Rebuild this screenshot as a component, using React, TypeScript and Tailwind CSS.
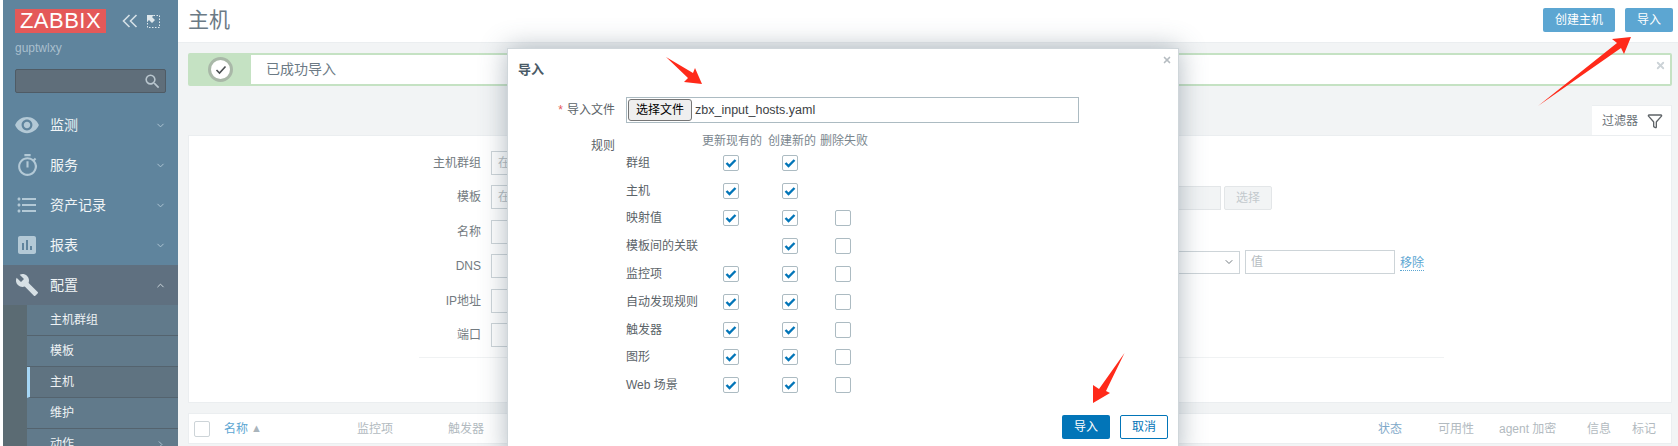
import React from 'react';
import { MdVisibility, MdOutlineTimer, MdFormatListBulleted, MdAssessment, MdBuild, MdSearch } from 'react-icons/md';
import { ChevronDown, ChevronUp, ChevronRight, Funnel, X } from 'lucide-react';

// Menu principal
const menuItems = [
  { label: '监测', icon: <MdVisibility size={26} /> },
  { label: '服务', icon: <MdOutlineTimer size={25} /> },
  { label: '资产记录', icon: <MdFormatListBulleted size={24} /> },
  { label: '报表', icon: <MdAssessment size={24} /> }
];

const subItems = ['主机群组', '模板', '主机', '维护', '动作'];

// Lignes du formulaire derrière la fenêtre
const filterRows = [
  { label: '主机群组', placeholder: '在' },
  { label: '模板', placeholder: '在' },
  { label: '名称' },
  { label: 'DNS' },
  { label: 'IP地址' },
  { label: '端口' }
];

const rules = [
  { label: '群组', update: true, create: true },
  { label: '主机', update: true, create: true },
  { label: '映射值', update: true, create: true, remove: true },
  { label: '模板间的关联', update: false, create: true, remove: true },
  { label: '监控项', update: true, create: true, remove: true },
  { label: '自动发现规则', update: true, create: true, remove: true },
  { label: '触发器', update: true, create: true, remove: true },
  { label: '图形', update: true, create: true, remove: true },
  { label: 'Web 场景', update: true, create: true, remove: true }
];

const Check: React.FC<{ checked?: boolean }> = ({ checked }) => (
  <div className="w-[16px] h-[16px] border border-[#acbbc2] rounded-[2px] bg-white flex items-center justify-center">
    {checked && (
      <svg width="12" height="10" viewBox="0 0 12 10">
        <path d="M1.5 5 L4.5 8 L10.5 2" fill="none" stroke="#0275b8" strokeWidth="2.4" />
      </svg>
    )}
  </div>
);

const Sidebar: React.FC = () => (
  <div className="w-[175px] h-[446px] shrink-0 bg-[#5f849d] overflow-hidden flex flex-col">
    <div className="h-[105px] shrink-0 pl-[12px] pt-[9px]">
      <div className="flex items-center">
        <div className="w-[91px] h-[24px] bg-[#e45959] text-white text-[22px] leading-[24px] text-center tracking-[0.5px]">
          ZABBIX
        </div>
        <svg className="ml-[16px]" width="16" height="14" viewBox="0 0 16 14">
          <path d="M7.5 1 L1.5 7 L7.5 13 M14.5 1 L8.5 7 L14.5 13" fill="none" stroke="#d5e0e6" strokeWidth="1.6" />
        </svg>
        <svg className="ml-[9px]" width="13" height="13" viewBox="0 0 13 13">
          <rect x="0.5" y="0.5" width="12" height="12" fill="none" stroke="#dfe8ec" strokeDasharray="1.5 1.5" />
          <path d="M0 0 H7 L5 2 L8 5 L5 8 L2 5 L0 7 Z" fill="#dfe8ec" />
        </svg>
      </div>
      <div className="text-[12px] leading-[14px] mt-[8px] text-[#a9bfcd]">guptwlxy</div>
      <div className="w-[151px] h-[24px] mt-[14px] bg-[#5f6e7a] border border-[#4f5b65] rounded-[2px] flex items-center justify-end pr-[3px] text-[#b9c6ce]">
        <MdSearch size={19} />
      </div>
    </div>
    {menuItems.map(item => (
      <div key={item.label} className="h-[40px] shrink-0 flex items-center text-[#f0f4f6] text-[14px]">
        <div className="w-[47px] flex justify-center pl-[1px] text-[#b3c9d6]">{item.icon}</div>
        <span>{item.label}</span>
        <ChevronDown className="ml-auto mr-[12px] text-[#b3c9d6]" size={11} />
      </div>
    ))}
    <div className="h-[40px] shrink-0 flex items-center bg-[#5f7080] text-[#f0f4f6] text-[14px]">
      <div className="w-[47px] flex justify-center pl-[1px] text-[#d7e0e5]">
        <MdBuild size={24} />
      </div>
      <span>配置</span>
      <ChevronUp className="ml-auto mr-[12px] text-[#d7e0e5]" size={11} />
    </div>
    <div className="flex flex-1">
      <div className="w-[24px] bg-[#5b6b73]" />
      <div className="flex-1">
        {subItems.map(item => (
          <div
            key={item}
            className={`h-[31px] flex items-center text-[12px] text-[#eef2f4] border-b border-[#54636e] ${
              item === '主机' ? 'bg-[#5f7381] border-l-[3px] border-l-[#a5d6f5] pl-[20px]' : 'bg-[#617a8b] pl-[23px]'
            }`}
          >
            {item}
            {item === '动作' && <ChevronRight className="ml-auto mr-[12px] text-[#b3c9d6]" size={11} />}
          </div>
        ))}
      </div>
    </div>
  </div>
);

const Background: React.FC = () => (
  <div className="flex-1 min-w-0 bg-[#f2f4f5] flex flex-col">
    <div className="h-[43px] shrink-0 bg-white border-b border-[#ebeef0] flex items-center pl-[10px] pr-[5px]">
      <h1 className="text-[21px] text-[#6b7a85] mb-[2px]">主机</h1>
      <div className="ml-auto flex gap-[10px] mb-[3px]">
        <button className="w-[72px] h-[24px] bg-[#5ca6d2] text-white text-[12px] rounded-[2px]">创建主机</button>
        <button className="w-[48px] h-[24px] bg-[#5ca6d2] text-white text-[12px] rounded-[2px]">导入</button>
      </div>
    </div>
    <div className="pl-[10px] pr-[6px] pt-[10px] flex flex-col">
      <div className="h-[33px] flex items-center border-2 border-[#c5e2c3] bg-white rounded-[2px]">
        <div className="w-[61px] h-full shrink-0 bg-[#c5e2c3] flex items-center justify-center">
          <div className="w-[25px] h-[25px] rounded-full bg-white border-[3px] border-[#a9b8a8] flex items-center justify-center">
            <svg width="12" height="10" viewBox="0 0 12 10">
              <path d="M1.5 5 L4.5 8 L10.5 1.5" fill="none" stroke="#4a4f52" strokeWidth="1.6" />
            </svg>
          </div>
        </div>
        <span className="ml-[15px] text-[14px] text-[#6c7a85]">已成功导入</span>
        <X className="ml-auto mr-[4px] mb-[8px] text-[#ccd3d7]" size={11} strokeWidth={4} />
      </div>
      <div className="mt-[19px] h-[30px] flex justify-end">
        <div className="w-[80px] bg-white border-t border-r border-[#ebeef0] flex items-center text-[12px] text-[#6b7177] pl-[10px]">
          过滤器
          <Funnel className="ml-[9px] text-[#5e6367]" size={16} />
        </div>
      </div>
      <div className="h-[268px] bg-white border border-[#ebeef0] relative flex">
        <div className="flex flex-col w-[800px] shrink-0">
          <div className="pt-[15px] flex flex-col gap-[10.4px]">
            {filterRows.map(row => (
              <div key={row.label} className="flex items-center h-[24px] text-[12px] text-[#737b81]">
                <div className="w-[292px] text-right">{row.label}</div>
                <div className="ml-[10px] w-[400px] h-[24px] border border-[#cdd4d8] pl-[6px] leading-[22px] text-[#b5bcc1]">
                  {row.placeholder}
                </div>
              </div>
            ))}
          </div>
          <div className="ml-[230px] w-[1025px] mt-[10px] border-t border-[#f0f2f3]" />
        </div>
        <div className="flex-1 flex flex-col pt-[50px] text-[12px]">
          <div className="flex items-center h-[24px]">
            <div className="w-[232px] h-[24px] bg-[#f2f4f5] border border-[#e3e6e8]" />
            <div className="ml-[3px] w-[48px] h-[24px] bg-[#f2f4f5] border border-[#e3e6e8] rounded-[2px] flex items-center justify-center text-[#c3c9cd]">
              选择
            </div>
          </div>
          <div className="flex items-center mt-[40px]">
            <div className="w-[251px] h-[23px] border border-[#cdd4d8] flex items-center justify-end pr-[4px] text-[#737b81]">
              <ChevronDown size={12} />
            </div>
            <div className="ml-[5px] w-[150px] h-[24px] border border-[#cdd4d8] pl-[5px] leading-[22px] text-[#b5bcc1]">值</div>
            <span className="ml-[5px] text-[#5ca6d2] border-b border-dotted border-[#5ca6d2] leading-[14px] mt-[3px]">移除</span>
          </div>
        </div>
      </div>
      <div className="mt-[10px] h-[31px] bg-white border border-[#ebeef0] flex items-center text-[12px] text-[#b2bac0]">
        <div className="ml-[5px] w-[16px] h-[16px] border border-[#cdd4d8] rounded-[2px]" />
        <span className="ml-[14px] text-[#5ca6d2]">名称</span>
        <span className="ml-[3px] text-[11px] text-[#a9b4bb]">▲</span>
        <span className="ml-[95px]">监控项</span>
        <span className="ml-[55px]">触发器</span>
        <div className="ml-auto flex pr-[15px]">
          <span className="w-[60px] text-[#7fa9c9]">状态</span>
          <span className="w-[61px]">可用性</span>
          <span className="w-[88px]">agent 加密</span>
          <span className="w-[45px]">信息</span>
          <span>标记</span>
        </div>
      </div>
    </div>
  </div>
);

const ImportDialog: React.FC = () => (
  <div className="absolute left-[507px] top-[48px] w-[672px] h-[410px] bg-white border border-[#cfd6da] shadow-[0_0_25px_rgba(80,100,115,0.45)] text-[12px] text-[#5b6368]">
    <X className="absolute right-[6px] top-[6px] text-[#b5bcc1]" size={10} strokeWidth={4} />
    <div className="pl-[10px] pt-[12px] text-[13px] leading-[18px] font-bold text-[#4a5a66]">导入</div>
    <div className="flex items-center mt-[18px] h-[26px]">
      <div className="w-[107px] text-right">
        <span className="text-[#e45959] mr-[4px]">*</span>导入文件
      </div>
      <div className="ml-[11px] w-[453px] h-[26px] border border-[#acbbc2] flex items-center pl-[1px] text-[#3c4144]">
        <button className="w-[64px] h-[22px] bg-[#efefef] border border-[#767676] rounded-[3px] text-[12px] text-black">选择文件</button>
        <span className="ml-[3px] text-[12.5px]">zbx_input_hosts.yaml</span>
      </div>
    </div>
    <div className="flex mt-[10px]">
      <div className="w-[107px] text-right pt-[4px]">规则</div>
      <div className="ml-[11px] flex flex-col">
        <div className="flex h-[16px] text-[#7a868e] leading-[16px]">
          <span className="ml-[76px] w-[66px]">更新现有的</span>
          <span className="w-[52px]">创建新的</span>
          <span>删除失败</span>
        </div>
        {rules.map(rule => (
          <div key={rule.label} className="flex items-center h-[27.8px]">
            <span className="w-[97px]">{rule.label}</span>
            <div className="w-[59px]">{rule.update && <Check checked />}</div>
            <div className="w-[53px]"><Check checked={rule.create} /></div>
            {rule.remove && <Check />}
          </div>
        ))}
      </div>
    </div>
    <div className="absolute left-[554px] top-[366px] flex gap-[10px]">
      <button className="w-[48px] h-[24px] bg-[#0275b8] text-white rounded-[2px]">导入</button>
      <button className="w-[48px] h-[24px] border border-[#0275b8] text-[#0275b8] bg-white rounded-[2px]">取消</button>
    </div>
  </div>
);

const App: React.FC = () => (
  <div className="relative w-[1678px] h-[446px] overflow-hidden bg-white pl-[3px] flex font-['Liberation_Sans','Noto_Sans_CJK_SC',sans-serif]">
    <Sidebar />
    <Background />
    <ImportDialog />
    {/* Flèches rouges d'annotation */}
    <svg className="absolute left-0 top-0 pointer-events-none" width="1678" height="446" viewBox="0 0 1678 446">
      <polygon points="666,57 693,73 695,68 702,84 684,82 688,78" fill="#ff2a1a" />
      <polygon points="1538,106 1617,43 1612,39 1631,37 1624,54 1621,48" fill="#ff2a1a" />
      <polygon points="1124.5,353 1106,391 1110,393 1093,403 1093,385 1099,389" fill="#ff2a1a" />
    </svg>
  </div>
);

export default App;
